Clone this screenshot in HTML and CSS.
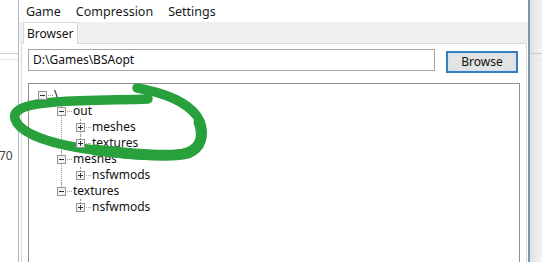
FILE: index.html
```html
<!DOCTYPE html>
<html>
<head>
<meta charset="utf-8">
<link rel="stylesheet" href="styles.css">
</head>
<body>
<div class="desktop">
  <div class="bg-left">
    <div class="bg-line dark"></div>
    <div class="bg-line light"></div>
    <div class="bg-num">70</div>
  </div>
  <div class="window">
    <div class="menubar">
      <span class="menu m-game">Game</span>
      <span class="menu m-comp">Compression</span>
      <span class="menu m-set">Settings</span>
    </div>
    <div class="tabstrip">
      <div class="tab">Browser</div>
    </div>
    <div class="panel">
      <div class="pathrow">
        <div class="pathfield">D:\Games\BSAopt</div>
        <div class="button">Browse</div>
      </div>
      <div class="treeview">
        <ul class="tree">
          <li class="node root">
            <div class="row"><svg class="box" width="9" height="9" viewBox="0 0 9 9"><rect x="0.5" y="0.5" width="8" height="8" fill="#f3f3f3" stroke="#969696"/><path d="M2 4.5H7" stroke="#333"/></svg><span class="dash"></span><span class="label">\</span></div>
            <ul>
              <li class="node">
                <div class="row"><svg class="box" width="9" height="9" viewBox="0 0 9 9"><rect x="0.5" y="0.5" width="8" height="8" fill="#f3f3f3" stroke="#969696"/><path d="M2 4.5H7" stroke="#333"/></svg><span class="dash"></span><span class="label">out</span></div>
                <ul>
                  <li class="node">
                    <div class="row"><svg class="box" width="9" height="9" viewBox="0 0 9 9"><rect x="0.5" y="0.5" width="8" height="8" fill="#f3f3f3" stroke="#969696"/><path d="M2 4.5H7M4.5 2V7" stroke="#333"/></svg><span class="dash"></span><span class="label">meshes</span></div>
                  </li>
                  <li class="node last">
                    <div class="row"><svg class="box" width="9" height="9" viewBox="0 0 9 9"><rect x="0.5" y="0.5" width="8" height="8" fill="#f3f3f3" stroke="#969696"/><path d="M2 4.5H7M4.5 2V7" stroke="#333"/></svg><span class="dash"></span><span class="label">textures</span></div>
                  </li>
                </ul>
              </li>
              <li class="node">
                <div class="row"><svg class="box" width="9" height="9" viewBox="0 0 9 9"><rect x="0.5" y="0.5" width="8" height="8" fill="#f3f3f3" stroke="#969696"/><path d="M2 4.5H7" stroke="#333"/></svg><span class="dash"></span><span class="label">meshes</span></div>
                <ul>
                  <li class="node last">
                    <div class="row"><svg class="box" width="9" height="9" viewBox="0 0 9 9"><rect x="0.5" y="0.5" width="8" height="8" fill="#f3f3f3" stroke="#969696"/><path d="M2 4.5H7M4.5 2V7" stroke="#333"/></svg><span class="dash"></span><span class="label">nsfwmods</span></div>
                  </li>
                </ul>
              </li>
              <li class="node last">
                <div class="row"><svg class="box" width="9" height="9" viewBox="0 0 9 9"><rect x="0.5" y="0.5" width="8" height="8" fill="#f3f3f3" stroke="#969696"/><path d="M2 4.5H7" stroke="#333"/></svg><span class="dash"></span><span class="label">textures</span></div>
                <ul>
                  <li class="node last">
                    <div class="row"><svg class="box" width="9" height="9" viewBox="0 0 9 9"><rect x="0.5" y="0.5" width="8" height="8" fill="#f3f3f3" stroke="#969696"/><path d="M2 4.5H7M4.5 2V7" stroke="#333"/></svg><span class="dash"></span><span class="label">nsfwmods</span></div>
                  </li>
                </ul>
              </li>
            </ul>
          </li>
        </ul>
      </div>
    </div>
  </div>
  <div class="bg-right">
    <div class="bg-line dark"></div>
    <div class="bg-line light"></div>
  </div>
</div>
<svg class="scribble" width="542" height="262" viewBox="0 0 542 262">
  <path d="M137,88 C160,92 185,100 197,116 C206,130 203,146 188,152 C170,159 120,154 80,148 C50,143 20,134 15,119 C12,108 30,104 55,102 C85,100 120,100 148,99" fill="none" stroke="#28a03b" stroke-width="9.5" stroke-linecap="round" stroke-linejoin="round"/>
  <path d="M199,122 C204,136 201,148 188,153 C172,158 130,154 95,150" fill="none" stroke="#28a03b" stroke-width="11" stroke-linecap="round"/>
</svg>
</body>
</html>
```

FILE: styles.css
```css
html, body {
  margin: 0;
  padding: 0;
}
body {
  width: 542px;
  height: 262px;
  overflow: hidden;
  position: relative;
  background: #fff;
  font-family: "Noto Sans", "Open Sans", sans-serif;
  font-size: 12px;
  color: #111;
}
.desktop {
  display: flex;
  height: 262px;
  overflow: hidden;
}
.bg-left {
  width: 18px;
  flex: none;
  background: #fff;
  padding-top: 53px;
  box-sizing: border-box;
}
.bg-line {
  height: 1px;
}
.bg-line.dark {
  background: #cfcfcf;
}
.bg-line.light {
  margin-top: 5px;
  background: #e6e6e6;
}
.bg-num {
  margin-top: 90px;
  font-size: 12px;
  color: #444;
  line-height: 12px;
  margin-left: -1px;
}
.window {
  width: 512px;
  flex: none;
  box-sizing: border-box;
  border-left: 1px solid #a3b9cf;
  border-right: 2px solid #7d96ae;
  display: flex;
  flex-direction: column;
  background: #fff;
  overflow: hidden;
}
.menubar {
  flex: none;
  height: 22px;
  box-sizing: border-box;
  padding-top: 2px;
  display: flex;
  align-items: center;
  background: #fff;
  padding-left: 7px;
}
.menu {
  color: #1a1a1a;
  font-size: 12.5px;
  line-height: 14px;
}
.m-comp { margin-left: 15px; }
.m-set { margin-left: 15px; }
.tabstrip {
  flex: none;
  height: 21px;
  background: #f0f0f0;
  display: flex;
  align-items: flex-end;
  padding-left: 4px;
  position: relative;
  z-index: 1;
}
.tab {
  height: 22px;
  margin-bottom: -1px;
  width: 55px;
  box-sizing: border-box;
  background: #fff;
  border: 1px solid #d9d9d9;
  border-bottom: none;
  padding-left: 3px;
  font-size: 12px;
  line-height: 21px;
  color: #111;
}
.panel {
  flex: 1;
  min-height: 0;
  overflow: hidden;
  margin-left: 2px;
  margin-right: 1px;
  border: 1px solid #d9d9d9;
  border-bottom: none;
  background: #fff;
  padding: 5px 6px 0 6px;
}
.pathrow {
  display: flex;
  align-items: flex-start;
  gap: 11px;
}
.pathfield {
  width: 407px;
  height: 22px;
  box-sizing: border-box;
  border: 1px solid #a5a5a5;
  padding-left: 4px;
  font-size: 12px;
  line-height: 20px;
  color: #111;
}
.button {
  width: 72px;
  height: 22px;
  margin-top: 2px;
  box-sizing: border-box;
  border: 2px solid #3a7ebd;
  background: #e3e3e3;
  text-align: center;
  font-size: 12px;
  line-height: 18px;
  color: #111;
  box-shadow: inset 0 0 0 1px #cde3f5;
}
.treeview {
  margin-top: 10px;
  height: 190px;
  border: 1px solid #8f8f8f;
  padding: 3px 0 0 9px;
}
.tree, .tree ul {
  list-style: none;
  margin: 0;
  padding: 0;
}
.tree ul {
  padding-left: 19px;
}
.node {
  position: relative;
}
.node::before {
  content: "";
  position: absolute;
  left: 4px;
  top: 0;
  bottom: 0;
  border-left: 1px dotted #9a9a9a;
}
.node.last::before {
  bottom: auto;
  height: 8px;
}
.node.root::before {
  display: none;
}
.row {
  height: 16px;
  display: flex;
  align-items: center;
  position: relative;
}
.box {
  display: block;
  flex: none;
  position: relative;
  z-index: 1;
}
.dash {
  width: 5px;
  margin: 0 1px 0 1px;
  border-top: 1px dotted #9a9a9a;
  align-self: center;
}
.label {
  font-size: 12px;
  line-height: 16px;
  color: #111;
}
.bg-right {
  flex: 1;
  background: linear-gradient(to right, #d8dfe6 0, #e4e4e4 2px, #f3f3f3 100%);
  padding-top: 53px;
}
.bg-right .bg-line.dark { background: #c9c9c9; }
.scribble {
  position: absolute;
  left: 0;
  top: 0;
  pointer-events: none;
}
```
